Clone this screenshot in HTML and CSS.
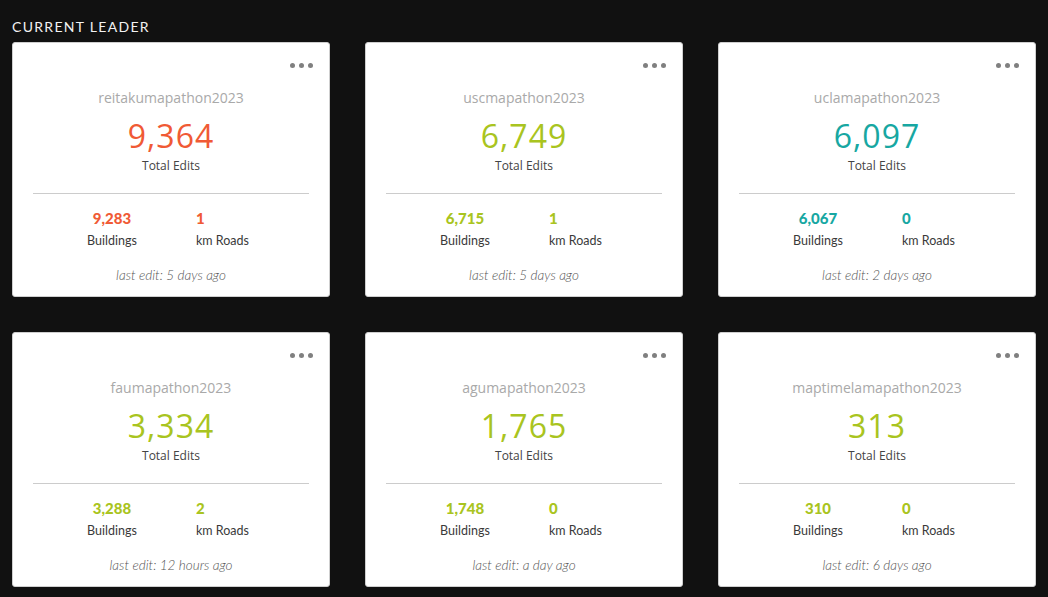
FILE: index.html
```html
<!DOCTYPE html>
<html>
<head>
<meta charset="utf-8">
<link rel="stylesheet" href="styles.css">
</head>
<body>
<h2 class="title">CURRENT LEADER</h2>
<div class="grid">
  <div class="card orange">
    <div class="dots"><span></span><span></span><span></span></div>
    <div class="name">reitakumapathon2023</div>
    <div class="total">9,364</div>
    <div class="total-label">Total Edits</div>
    <div class="stats">
      <div class="stat s1"><div class="val">9,283</div><div class="lab">Buildings</div></div>
      <div class="stat s2"><div class="val">1</div><div class="lab">km Roads</div></div>
    </div>
    <div class="last">last edit: 5 days ago</div>
  </div>
  <div class="card green">
    <div class="dots"><span></span><span></span><span></span></div>
    <div class="name">uscmapathon2023</div>
    <div class="total">6,749</div>
    <div class="total-label">Total Edits</div>
    <div class="stats">
      <div class="stat s1"><div class="val">6,715</div><div class="lab">Buildings</div></div>
      <div class="stat s2"><div class="val">1</div><div class="lab">km Roads</div></div>
    </div>
    <div class="last">last edit: 5 days ago</div>
  </div>
  <div class="card teal">
    <div class="dots"><span></span><span></span><span></span></div>
    <div class="name">uclamapathon2023</div>
    <div class="total">6,097</div>
    <div class="total-label">Total Edits</div>
    <div class="stats">
      <div class="stat s1"><div class="val">6,067</div><div class="lab">Buildings</div></div>
      <div class="stat s2"><div class="val">0</div><div class="lab">km Roads</div></div>
    </div>
    <div class="last">last edit: 2 days ago</div>
  </div>
  <div class="card green">
    <div class="dots"><span></span><span></span><span></span></div>
    <div class="name">faumapathon2023</div>
    <div class="total">3,334</div>
    <div class="total-label">Total Edits</div>
    <div class="stats">
      <div class="stat s1"><div class="val">3,288</div><div class="lab">Buildings</div></div>
      <div class="stat s2"><div class="val">2</div><div class="lab">km Roads</div></div>
    </div>
    <div class="last">last edit: 12 hours ago</div>
  </div>
  <div class="card green">
    <div class="dots"><span></span><span></span><span></span></div>
    <div class="name">agumapathon2023</div>
    <div class="total">1,765</div>
    <div class="total-label">Total Edits</div>
    <div class="stats">
      <div class="stat s1"><div class="val">1,748</div><div class="lab">Buildings</div></div>
      <div class="stat s2"><div class="val">0</div><div class="lab">km Roads</div></div>
    </div>
    <div class="last">last edit: a day ago</div>
  </div>
  <div class="card green">
    <div class="dots"><span></span><span></span><span></span></div>
    <div class="name">maptimelamapathon2023</div>
    <div class="total">313</div>
    <div class="total-label">Total Edits</div>
    <div class="stats">
      <div class="stat s1"><div class="val">310</div><div class="lab">Buildings</div></div>
      <div class="stat s2"><div class="val">0</div><div class="lab">km Roads</div></div>
    </div>
    <div class="last">last edit: 6 days ago</div>
  </div>
</div>
</body>
</html>
```
FILE: styles.css
```css
html, body {
  margin: 0;
  background: #111111;
}
body {
  padding: 17px 12px 0 12px;
  font-family: "Open Sans", "Liberation Sans", sans-serif;
}
.title {
  margin: 0;
  height: 25px;
  font-family: "Lato", "Open Sans", sans-serif;
  font-weight: 400;
  font-size: 14px;
  line-height: 20px;
  letter-spacing: 1.3px;
  color: #f2f2f2;
}
.grid {
  display: grid;
  grid-template-columns: repeat(3, 318px);
  grid-auto-rows: 255px;
  column-gap: 35px;
  row-gap: 35px;
}
.card {
  box-sizing: border-box;
  background: #ffffff;
  border: 1px solid #cfcfcf;
  border-radius: 3px;
  padding: 15px 20px 0 20px;
  display: flex;
  flex-direction: column;
  text-align: center;
}
.dots {
  height: 14px;
  display: flex;
  justify-content: flex-end;
  align-items: center;
  gap: 4px;
  margin-right: -4px;
}
.dots span {
  width: 5px;
  height: 5px;
  border-radius: 50%;
  background: #808080;
}
.name {
  margin-top: 16px;
  font-size: 14px;
  line-height: 20px;
  color: #a9a9a9;
}
.total {
  margin-top: 8px;
  font-size: 32px;
  line-height: 40px;
  font-weight: 400;
  letter-spacing: 1px;
}
.total-label {
  margin-top: 2px;
  font-size: 12px;
  line-height: 16px;
  color: #444444;
}
.stats {
  margin-top: 19px;
  border-top: 1px solid #cccccc;
  padding-top: 14px;
  display: flex;
  text-align: left;
}
.stat .val {
  font-family: "Lato", "Open Sans", sans-serif;
  font-weight: 900;
  font-size: 15px;
  line-height: 20px;
}
.stat .lab {
  margin-top: 4px;
  font-family: "Lato", "Open Sans", sans-serif;
  font-size: 12.5px;
  line-height: 18px;
  color: #3a3a3a;
}
.s1 {
  width: 158px;
  text-align: center;
}
.s2 {
  margin-left: 5px;
}
.last {
  margin-top: 17px;
  font-family: "Lato", "Open Sans", sans-serif;
  font-style: italic;
  font-weight: 300;
  font-size: 13.5px;
  line-height: 16px;
  color: #555555;
}
.orange .total, .orange .val { color: #f05a35; }
.green .total, .green .val { color: #a9c420; }
.teal .total, .teal .val { color: #17a7a2; }
```
